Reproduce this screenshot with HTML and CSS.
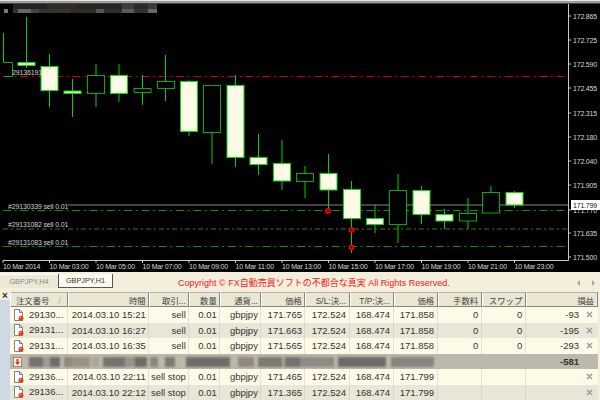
FILE: index.html
```html
<!DOCTYPE html>
<html lang="ja">
  <head>
    <meta charset="UTF-8">
    <title>GBPJPY,H1</title>
    <link rel="stylesheet" href="styles.css">
  </head>
  <body>
    <svg class="defs" width="0" height="0">
      <symbol id="doc" viewBox="0 0 11 12">
        <path d="M1.500 .5h5l3 3v8h-8z" fill="#fff" stroke="#808080"/>
        <path d="M6.500 .5v3h3" fill="none" stroke="#808080"/>
        <circle cx="8" cy="9.200" r="2.500" fill="#e2401a"/>
        <circle cx="7.400" cy="8.500" r=".8" fill="#f7a080"/>
      </symbol>
      <symbol id="group" viewBox="0 0 9 10">
        <rect x=".5" y=".5" width="8" height="9" fill="#fbeedd" stroke="#a08a70"/>
        <path d="M3.500 2h2v3h1.500l-2.500 3-2.500-3h1.500z" fill="#dc3a14"/>
      </symbol>
      <symbol id="close" viewBox="0 0 7 7">
        <path d="M1 1l5 5M6 1l-5 5" stroke="#9aa0a6" stroke-width="1.600"/>
      </symbol>
    </svg>

    <div class="chart-window">
      <svg class="chart" viewBox="0 4 600 268" width="600" height="268">
        <!-- hidden window title -->
        <g class="mosaic">
          <rect x="13" y="4" width="34" height="5" fill="#232323"/>
          <rect x="47" y="4" width="30" height="5" fill="#2f2c2c"/>
          <rect x="77" y="4" width="45" height="5" fill="#262626"/>
          <rect x="122" y="4" width="12" height="5" fill="#3c3c3c"/>
          <rect x="134" y="4" width="14" height="5" fill="#2a2a2a"/>
          <rect x="148" y="4" width="9" height="5" fill="#3a3a3a"/>
          <rect x="4" y="9" width="4" height="4" fill="#777"/>
          <rect x="13" y="9" width="5" height="4" fill="#333"/>
          <rect x="18" y="9" width="13" height="4" fill="#666"/>
          <rect x="31" y="9" width="8" height="4" fill="#444"/>
          <rect x="39" y="9" width="18" height="4" fill="#333"/>
          <rect x="57" y="9" width="13" height="4" fill="#3e3328"/>
          <rect x="70" y="9" width="26" height="4" fill="#332c26"/>
          <rect x="96" y="9" width="8" height="4" fill="#555"/>
          <rect x="104" y="9" width="18" height="4" fill="#302c28"/>
          <rect x="122" y="9" width="12" height="4" fill="#5a5a5a"/>
          <rect x="134" y="9" width="14" height="4" fill="#333"/>
          <rect x="148" y="9" width="9" height="4" fill="#666"/>
        </g>

        <!-- order lines -->
        <line class="line-red" x1="3" y1="76.500" x2="568" y2="76.500"/>
        <line class="line-bid" x1="68" y1="205" x2="568" y2="205"/>
        <line class="line-green" x1="3" y1="210.500" x2="568" y2="210.500"/>
        <line class="line-green dim" x1="3" y1="229" x2="568" y2="229"/>
        <line class="line-green" x1="3" y1="246.500" x2="568" y2="246.500"/>

        <!-- candles -->
        <path class="wick" d="M3.500 33V62M26.500 17V68M49.500 54V107M72.500 79V117M96 64V107M119 64V102M142.500 75V105M165.500 55V101M189 80V136M212 132V164M235.500 75V167M258.500 134V175M282 140V190M305 166V198M328.500 154V211M351.500 181V253M375 205V233M398 174V243M421.500 186V224M444.500 209V229M468 198V229M491 186V213M514.500 191V208"/>
        <path class="down" d="M3.500 62.500H12.500V76.500H3.500"/>
        <rect class="up" x="18" y="62.500" width="17" height="3"/>
        <rect class="up" x="41" y="66.500" width="17" height="24"/>
        <rect class="up" x="64" y="91" width="17" height="2.500"/>
        <rect class="down" x="87.500" y="75.500" width="17" height="18"/>
        <rect class="up" x="110.500" y="75.500" width="17" height="18"/>
        <rect class="down" x="134" y="88.500" width="17" height="4"/>
        <rect class="down" x="157.500" y="81.500" width="17" height="7"/>
        <rect class="up" x="180.500" y="81.500" width="17" height="50"/>
        <rect class="down" x="203.500" y="85.500" width="17" height="47"/>
        <rect class="up" x="227" y="85.500" width="17" height="72"/>
        <rect class="up" x="250" y="157.500" width="17" height="7"/>
        <rect class="up" x="273.500" y="163.500" width="17" height="17.500"/>
        <rect class="down" x="296.500" y="173.500" width="17" height="8"/>
        <rect class="up" x="320" y="173.500" width="17" height="16.500"/>
        <rect class="up" x="343.500" y="189.500" width="17" height="29"/>
        <rect class="up" x="366.500" y="218.500" width="17" height="6"/>
        <rect class="down" x="389.500" y="190.500" width="17" height="34"/>
        <rect class="up" x="413" y="190.500" width="17" height="24"/>
        <rect class="up" x="436" y="214.500" width="17" height="6.500"/>
        <rect class="down" x="459.500" y="213.500" width="17" height="7.500"/>
        <rect class="down" x="482.500" y="192.500" width="17" height="20.500"/>
        <rect class="up" x="506" y="192.500" width="17" height="12.500"/>

        <circle class="marker" cx="328" cy="211" r="2.200"/>
        <circle class="marker" cx="351.500" cy="230" r="2.200"/>
        <circle class="marker" cx="351.500" cy="247.500" r="2.200"/>

        <text class="label" x="12" y="75">29136191</text>
        <text class="label" x="8" y="209">#29130339 sell 0.01</text>
        <text class="label" x="8" y="227">#29131082 sell 0.01</text>
        <text class="label" x="8" y="245">#29131083 sell 0.01</text>

        <!-- axes -->
        <path class="axis" d="M568.500 4V260.500H3V263"/>
        <path class="axis" d="M568 16h3M568 40h3M568 64h3M568 88h3M568 113h3M568 137h3M568 161h3M568 185h3M568 210h3M568 233h3M568 257h3M49.500 260v3M96 260v3M142.500 260v3M189 260v3M235.500 260v3M282 260v3M328.500 260v3M375 260v3M421.500 260v3M468 260v3M514.500 260v3"/>

        <text class="tick" x="573" y="18.500">172.865</text>
        <text class="tick" x="573" y="42.500">172.725</text>
        <text class="tick" x="573" y="66.500">172.590</text>
        <text class="tick" x="573" y="90.500">172.455</text>
        <text class="tick" x="573" y="115.500">172.315</text>
        <text class="tick" x="573" y="139.500">172.180</text>
        <text class="tick" x="573" y="163.500">172.040</text>
        <text class="tick" x="573" y="188">171.905</text>
        <text class="tick" x="573" y="213">171.770</text>
        <text class="tick" x="573" y="236">171.635</text>
        <text class="tick" x="573" y="259.500">171.500</text>
        <rect class="bid-box" x="571" y="200" width="29" height="10"/>
        <text class="bid-text" x="573" y="207.500">171.799</text>

        <text class="tick" x="3" y="269">10 Mar 2014</text>
        <text class="tick" x="49.500" y="269">10 Mar 03:00</text>
        <text class="tick" x="96" y="269">10 Mar 05:00</text>
        <text class="tick" x="142.500" y="269">10 Mar 07:00</text>
        <text class="tick" x="189" y="269">10 Mar 09:00</text>
        <text class="tick" x="235.500" y="269">10 Mar 11:00</text>
        <text class="tick" x="282" y="269">10 Mar 13:00</text>
        <text class="tick" x="328.500" y="269">10 Mar 15:00</text>
        <text class="tick" x="375" y="269">10 Mar 17:00</text>
        <text class="tick" x="421.500" y="269">10 Mar 19:00</text>
        <text class="tick" x="468" y="269">10 Mar 21:00</text>
        <text class="tick" x="514.500" y="269">10 Mar 23:00</text>
      </svg>
    </div>

    <div class="tab-bar">
      <div class="tab">GBPJPY,H4</div>
      <div class="tab active">GBPJPY,H1</div>
      <div class="copyright">Copyright © FX自動売買ソフトの不都合な真実 All Rights Reserved.</div>
      <svg class="tab-nav" width="18" height="7" viewBox="0 0 18 7">
        <path d="M3 0v6L0 3zM15 0v6l3-3z"/>
      </svg>
    </div>

    <div class="panel">
      <div class="panel-side"><span class="panel-close">×</span></div>
      <table class="trades">
        <colgroup>
          <col class="w58"><col class="w81"><col class="w40"><col class="w31"><col class="w41"><col class="w44"><col class="w44"><col class="w44"><col class="w44"><col class="w44"><col class="w44"><col class="w72">
        </colgroup>
        <thead>
          <tr>
            <th class="left">注文番号<span class="sort">/</span></th>
            <th>時間</th>
            <th>取引...</th>
            <th>数量</th>
            <th>通貨...</th>
            <th>価格</th>
            <th>S/L:決...</th>
            <th>T/P:決...</th>
            <th>価格</th>
            <th>手数料</th>
            <th>スワップ</th>
            <th class="profit-head">損益</th>
          </tr>
        </thead>
        <tbody>
          <tr>
            <td class="order"><svg class="doc"><use href="#doc"/></svg>29130...</td>
            <td>2014.03.10 15:21</td><td>sell</td><td>0.01</td><td>gbpjpy</td><td>171.765</td><td>172.524</td><td>168.474</td><td>171.858</td><td>0</td><td>0</td>
            <td class="profit">-93<svg class="close"><use href="#close"/></svg></td>
          </tr>
          <tr class="alt">
            <td class="order"><svg class="doc"><use href="#doc"/></svg>29131...</td>
            <td>2014.03.10 16:27</td><td>sell</td><td>0.01</td><td>gbpjpy</td><td>171.663</td><td>172.524</td><td>168.474</td><td>171.858</td><td>0</td><td>0</td>
            <td class="profit">-195<svg class="close"><use href="#close"/></svg></td>
          </tr>
          <tr>
            <td class="order"><svg class="doc"><use href="#doc"/></svg>29131...</td>
            <td>2014.03.10 16:35</td><td>sell</td><td>0.01</td><td>gbpjpy</td><td>171.565</td><td>172.524</td><td>168.474</td><td>171.858</td><td>0</td><td>0</td>
            <td class="profit">-293<svg class="close"><use href="#close"/></svg></td>
          </tr>
          <tr class="summary">
            <td colspan="9" class="summary-cell"><svg class="group"><use href="#group"/></svg><div class="summary-blur"></div></td>
            <td></td><td></td>
            <td class="profit total">-581</td>
          </tr>
          <tr>
            <td class="order"><svg class="doc"><use href="#doc"/></svg>29136...</td>
            <td>2014.03.10 22:11</td><td>sell stop</td><td>0.01</td><td>gbpjpy</td><td>171.465</td><td>172.524</td><td>168.474</td><td>171.799</td><td></td><td></td>
            <td class="profit"><svg class="close"><use href="#close"/></svg></td>
          </tr>
          <tr class="alt">
            <td class="order"><svg class="doc"><use href="#doc"/></svg>29136...</td>
            <td>2014.03.10 22:12</td><td>sell stop</td><td>0.01</td><td>gbpjpy</td><td>171.365</td><td>172.524</td><td>168.474</td><td>171.799</td><td></td><td></td>
            <td class="profit"><svg class="close"><use href="#close"/></svg></td>
          </tr>
        </tbody>
      </table>
    </div>
  </body>
</html>
```

FILE: styles.css
```css
* {
    margin: 0;
    padding: 0;
    box-sizing: border-box;
}

body {
    width: 600px;
    height: 400px;
    overflow: hidden;
    background: #f4efdc;
    font-family: "Liberation Sans", "Noto Sans CJK JP", sans-serif;
    color: #333;
}

.defs {
    display: block;
    height: 0;
}

/* Chart */
.chart-window {
    height: 272px;
    padding-top: 4px;
    background: linear-gradient(#e8e8e4 0 1px, #9c9c98 1px 3px, #444 3px 4px);
}

.chart {
    display: block;
    background: #000;
    font-family: "Liberation Sans", sans-serif;
}

.wick {
    stroke: #00d400;
    stroke-width: 1;
    fill: none;
}

.up {
    fill: #fbfbe8;
    stroke: #00e000;
    stroke-width: 1;
}

.down {
    fill: #000;
    stroke: #00b000;
    stroke-width: 1;
}

.line-red {
    stroke: #c80000;
    stroke-width: 1;
    stroke-dasharray: 8 3.600 2 3.700;
}

.line-green {
    stroke: #009a00;
    stroke-width: 1;
    stroke-dasharray: 8 3.600 2 3.700;
}

.line-green.dim {
    stroke: #3f7a20;
    stroke-dasharray: 5 3 2 3;
}

.line-bid {
    stroke: #5a5a5a;
    stroke-width: 1.500;
}

.marker {
    fill: #600;
    stroke: #f00000;
    stroke-width: 1.600;
}

.label {
    fill: #cfcfcf;
    font-size: 7px;
    letter-spacing: -.15px;
}

.axis {
    stroke: #c8c8c8;
    stroke-width: 1;
    fill: none;
}

.tick {
    fill: #d8d8d8;
    font-size: 7px;
    letter-spacing: -.2px;
}

.bid-box {
    fill: #fff;
}

.bid-text {
    fill: #111;
    font-size: 7px;
    letter-spacing: -.2px;
}

/* Tabs */
.tab-bar {
    height: 20px;
    padding-top: 2px;
    display: flex;
    align-items: flex-start;
    background: #f4efdc;
    font-size: 7.300px;
}

.tab {
    width: 58px;
    height: 13.500px;
    line-height: 13px;
    text-align: center;
    color: #8a8a86;
    background: #ece8d6;
    border-top: 1px solid #fff;
}

.tab.active {
    width: 55px;
    color: #333;
    background: #fdfbf0;
    border: 1px solid #555;
    border-top: 0;
}

.copyright {
    margin-left: 65px;
    line-height: 18px;
    font-size: 9px;
    white-space: nowrap;
    color: #f01818;
}

.tab-nav {
    margin: 6px 0 0 auto;
    margin-right: 5px;
    fill: #a8a8a8;
}

/* Trade table */
.panel {
    display: flex;
}

.panel-side {
    width: 10px;
    height: 108px;
    background: #cfd9e4;
    flex: none;
}

.panel-close {
    display: block;
    height: 8px;
    line-height: 8px;
    text-align: center;
    background: #f4efdc;
    font-size: 10px;
    font-weight: bold;
}

.trades {
    width: 588px;
    table-layout: fixed;
    border-collapse: separate;
    border-spacing: 0;
    font-size: 9.500px;
}

.w58 { width: 58px; }
.w81 { width: 81px; }
.w40 { width: 40px; }
.w31 { width: 31px; }
.w41 { width: 41px; }
.w44 { width: 44px; }
.w72 { width: 72px; }

.trades th {
    height: 15px;
    padding-right: 2.500px;
    text-align: right;
    font-size: 8.400px;
    font-weight: normal;
    color: #444;
    white-space: nowrap;
    overflow: hidden;
    background: #e9e6d3;
    border-left: 1px solid #fff;
    border-top: 1px solid #b4b4ac;
    border-right: 1px solid #85857f;
    border-bottom: 1px solid #85857f;
}

.trades th.left {
    text-align: left;
    padding-left: 5px;
}

.sort {
    margin-left: 9px;
    color: #aaa;
}

.trades th.profit-head {
    padding-right: 3px;
}

.trades td {
    height: 15.330px;
    padding-right: 2.500px;
    text-align: right;
    white-space: nowrap;
    overflow: hidden;
    background: #fdfbe8;
    border-right: 1px solid #e6e2c8;
}

.trades tr.alt td {
    background: #e8e6d6;
    border-right-color: #d8d6c4;
}

.trades td.order {
    text-align: left;
    padding-left: 3px;
    vertical-align: middle;
}

.doc {
    width: 11px;
    height: 12px;
    margin-right: 5px;
    vertical-align: middle;
}

.trades td.profit {
    position: relative;
    padding-right: 19px;
    border-right: 0;
}

.close {
    position: absolute;
    right: 5px;
    top: 4px;
    width: 7px;
    height: 7px;
}

.trades tr.summary td {
    background: #bcb8ab;
    border-right: 0;
}

.trades td.summary-cell {
    padding: 0 3px;
}

.summary-cell {
    vertical-align: middle;
}

.group {
    width: 9px;
    height: 10px;
    float: left;
    margin-top: 1px;
}

.summary-blur {
    float: left;
    margin: 1px 0 0 7px;
    width: 405px;
    height: 10px;
    filter: blur(.8px);
    background: linear-gradient(90deg,
        #74716e 0 14px, #a09c90 14px 21px, #6f6d6b 21px 31px, #bcb8ab 31px 35px,
        #8b8880 35px 43px, #9b9484 43px 61px, #bcb8ab 61px 63px, #a8a59a 63px 70px,
        #bcb8ab 70px 74px, #777470 74px 96px, #98948a 96px 106px, #6e6c6a 106px 118px,
        #bcb8ab 118px 121px, #8a8780 121px 129px, #bcb8ab 129px 136px, #7d7a75 136px 146px,
        #bcb8ab 146px 157px, #6f6d6b 157px 201px, #bcb8ab 201px 209px, #8f8a80 209px 225px,
        #bcb8ab 225px 229px, #7e7a72 229px 253px, #a8a59a 253px 256px, #747270 256px 271px,
        #8e8b85 271px 305px, #bcb8ab 305px 309px, #6e6c6a 309px 357px, #bcb8ab 357px 362px,
        #88857f 362px 405px);
}

.trades td.total {
    font-weight: bold;
}
```
